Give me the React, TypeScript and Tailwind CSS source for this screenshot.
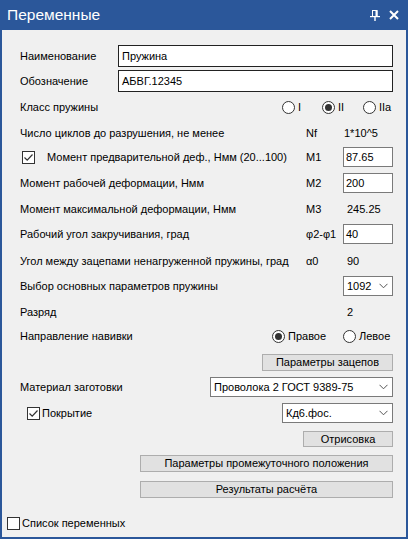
import React from "react";

const font = { fontFamily: '"Liberation Sans", Arial, sans-serif' };

function Radio({ checked }: { checked?: boolean }) {
  return (
    <span className="w-[13px] h-[13px] rounded-full border border-[#333] bg-white flex items-center justify-center shrink-0">
      {checked && <span className="w-[7px] h-[7px] rounded-full bg-[#333]" />}
    </span>
  );
}

function Check({ checked }: { checked?: boolean }) {
  return (
    <span className="w-[13px] h-[13px] border border-[#333] bg-white flex items-center justify-center shrink-0">
      {checked && (
        <svg width="11" height="11" viewBox="0 0 11 11">
          <path d="M1.5 5.5 L4.2 8.2 L9.5 2.5" fill="none" stroke="#333" strokeWidth="1.2" />
        </svg>
      )}
    </span>
  );
}

function Chevron() {
  return (
    <svg width="9" height="6" viewBox="0 0 9 6" className="shrink-0">
      <path d="M0.5 0.8 L4.5 4.8 L8.5 0.8" fill="none" stroke="#555" strokeWidth="1" />
    </svg>
  );
}

function Input({ value, className }: { value: string; className: string }) {
  return (
    <div className={"bg-white border border-[#7a7a7a] flex items-center pl-[2px] text-black " + className}>
      {value}
    </div>
  );
}

function Select({ value, className }: { value: string; className: string }) {
  return (
    <div className={"bg-white border border-[#7a7a7a] flex items-center justify-between pl-[3px] pr-[4px] text-black " + className}>
      <span>{value}</span>
      <Chevron />
    </div>
  );
}

function Btn({ label, className }: { label: string; className: string }) {
  return (
    <div className={"bg-[#e1e1e1] border border-[#adadad] flex items-center justify-center text-black " + className}>
      {label}
    </div>
  );
}

function ValueRow({
  label,
  sym,
  children,
  mt,
}: {
  label: React.ReactNode;
  sym?: string;
  children?: React.ReactNode;
  mt: string;
}) {
  return (
    <div className={"flex items-center h-[20px] " + mt}>
      <div className="flex-1 flex items-center">{label}</div>
      <div className="w-[37px]">{sym}</div>
      <div className="w-[50px] h-full flex items-center">{children}</div>
    </div>
  );
}

export default function App() {
  return (
    <div style={font} className="w-[408px] h-[539px] bg-[#2b579a] flex flex-col text-[11px] text-black leading-none">
      <div className="h-[30px] flex items-center justify-between pl-[7px] pr-[9px] shrink-0">
        <span className="text-white text-[15.5px]">Переменные</span>
        <div className="flex items-center gap-[9px]">
          <svg width="10" height="11" viewBox="0 0 10 11">
            <path d="M2.5 0.5 H7 V6" fill="none" stroke="white" strokeWidth="1" />
            <rect x="2" y="0" width="1" height="6.5" fill="white" />
            <rect x="5.5" y="0" width="2" height="6.5" fill="white" />
            <rect x="0" y="6" width="10" height="1.2" fill="white" />
            <rect x="4.3" y="6" width="1.4" height="5" fill="white" />
          </svg>
          <svg width="10" height="10" viewBox="0 0 10 10">
            <path d="M1 1 L9 9 M9 1 L1 9" stroke="white" strokeWidth="2" />
          </svg>
        </div>
      </div>
      <div className="flex-1 bg-[#f0f0f0] mx-[2px] mb-[2px] flex flex-col pl-[18px] pr-[13px]">
        <div className="flex items-center h-[22px] mt-[15px]">
          <div className="w-[98px]">Наименование</div>
          <div className="flex-1 h-full bg-white border border-[#222] flex items-center pl-[3px]">Пружина</div>
        </div>
        <div className="flex items-center h-[22px] mt-[3px]">
          <div className="w-[98px]">Обозначение</div>
          <div className="flex-1 h-full bg-white border border-[#222] flex items-center pl-[3px]">АБВГ.12345</div>
        </div>
        <div className="flex items-center h-[20px] mt-[5px]">
          <div className="flex-1">Класс пружины</div>
          <div className="flex items-center w-[40px] gap-[3px]">
            <Radio />
            <span>I</span>
          </div>
          <div className="flex items-center w-[41px] gap-[3px]">
            <Radio checked />
            <span>II</span>
          </div>
          <div className="flex items-center w-[30px] gap-[3px]">
            <Radio />
            <span>IIa</span>
          </div>
        </div>
        <ValueRow mt="mt-[6px]" label="Число циклов до разрушения, не менее" sym="Nf">
          <span className="pl-[1px]">1*10^5</span>
        </ValueRow>
        <ValueRow
          mt="mt-[4px]"
          label={
            <>
              <span className="ml-[2px] mr-[12px]">
                <Check checked />
              </span>
              <span>Момент предварительной деф., Нмм (20...100)</span>
            </>
          }
          sym="M1"
        >
          <Input value="87.65" className="w-full h-full" />
        </ValueRow>
        <ValueRow mt="mt-[6px]" label="Момент рабочей деформации, Нмм" sym="M2">
          <Input value="200" className="w-full h-full" />
        </ValueRow>
        <ValueRow mt="mt-[6px]" label="Момент максимальной деформации, Нмм" sym="M3">
          <span className="pl-[4px]">245.25</span>
        </ValueRow>
        <ValueRow mt="mt-[5px]" label="Рабочий угол закручивания, град" sym="φ2-φ1">
          <Input value="40" className="w-full h-full" />
        </ValueRow>
        <ValueRow mt="mt-[7px]" label="Угол между зацепами ненагруженной пружины, град" sym="α0">
          <span className="pl-[4px]">90</span>
        </ValueRow>
        <ValueRow mt="mt-[5px]" label="Выбор основных параметров пружины">
          <Select value="1092" className="w-full h-full" />
        </ValueRow>
        <ValueRow mt="mt-[6px]" label="Разряд">
          <span className="pl-[4px]">2</span>
        </ValueRow>
        <div className="flex items-center h-[20px] mt-[4px]">
          <div className="flex-1">Направление навивки</div>
          <div className="flex items-center w-[71px] gap-[3px]">
            <Radio checked />
            <span>Правое</span>
          </div>
          <div className="flex items-center w-[50px] gap-[3px]">
            <Radio />
            <span>Левое</span>
          </div>
        </div>
        <div className="flex justify-end mt-[8px]">
          <Btn label="Параметры зацепов" className="w-[131px] h-[17px]" />
        </div>
        <div className="flex items-center h-[20px] mt-[6px]">
          <div className="flex-1">Материал заготовки</div>
          <Select value="Проволока 2 ГОСТ 9389-75" className="w-[183px] h-full" />
        </div>
        <div className="flex items-center h-[20px] mt-[6px]">
          <div className="flex-1 flex items-center gap-[2px] pl-[7px]">
            <Check checked />
            <span>Покрытие</span>
          </div>
          <Select value="Кд6.фос." className="w-[111px] h-full" />
        </div>
        <div className="flex justify-end mt-[8px]">
          <Btn label="Отрисовка" className="w-[90px] h-[16px]" />
        </div>
        <div className="flex justify-end mt-[8px]">
          <Btn label="Параметры промежуточного положения" className="w-[253px] h-[17px]" />
        </div>
        <div className="flex justify-end mt-[9px]">
          <Btn label="Результаты расчёта" className="w-[253px] h-[17px]" />
        </div>
        <div className="flex items-center h-[18px] mt-[16px] -ml-[13px] gap-[2px]">
          <Check />
          <span>Список переменных</span>
        </div>
      </div>
    </div>
  );
}
